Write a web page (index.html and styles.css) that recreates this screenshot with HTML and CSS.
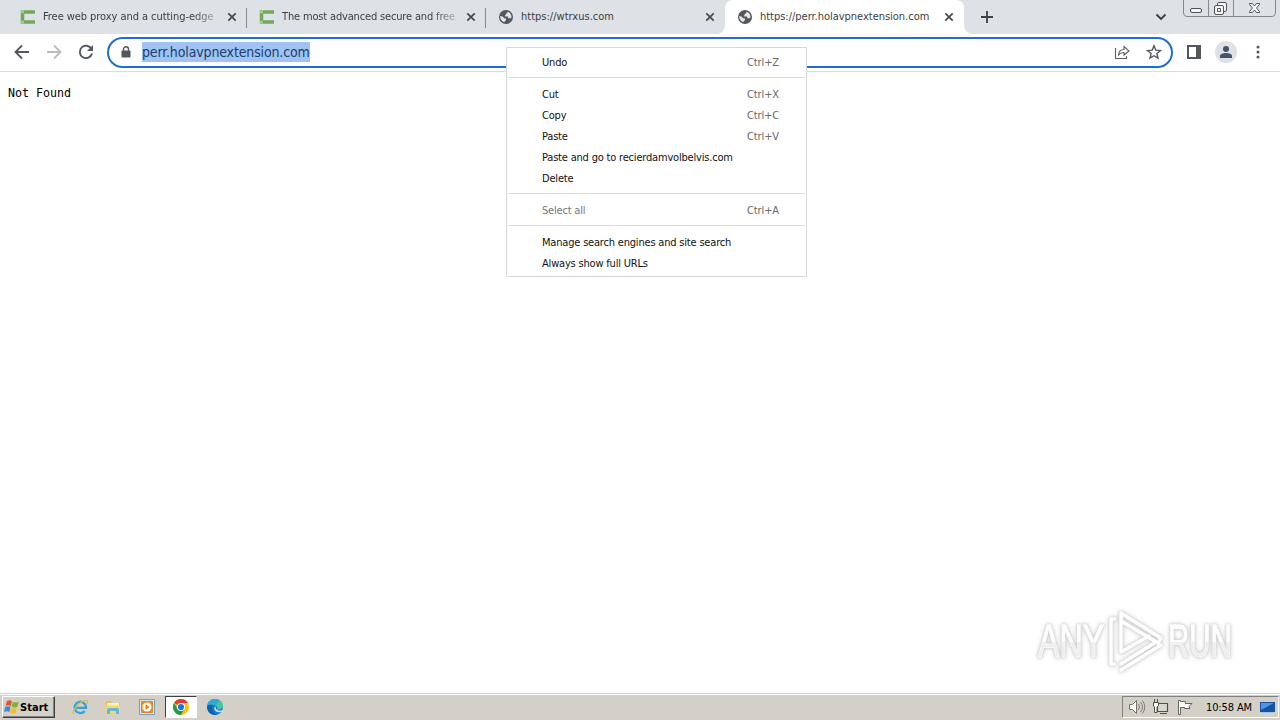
FILE: index.html
```html
<!DOCTYPE html>
<html lang="en">
<head>
<meta charset="utf-8">
<title>perr.holavpnextension.com</title>
<link rel="stylesheet" href="styles.css">
</head>
<body>
<svg class="defs" width="0" height="0">
  <symbol id="globe" viewBox="0 0 14 14"><circle cx="7" cy="7" r="7" fill="#54585d"/><path d="M1.200 6 3.500 6.500 5.500 8.500H7v1.500L5.500 11.500v.8C3 11.500 1 9.300 1.200 6ZM8.300 1.700C11.300 2.400 12.600 4.700 12.500 7.200L11.500 8.200H9.200V6.500H6.200V4.700L7.300 4.200V3.300H8.300Z" fill="#e4e7eb"/></symbol>
  <symbol id="cross" viewBox="0 0 10 10"><path d="M1.300 1.300 8.700 8.700M8.700 1.300 1.300 8.700" stroke="#45494d" stroke-width="1.700"/></symbol>
  <symbol id="cicon" viewBox="0 0 16 16"><path d="M15 3H2.500v10H15" fill="none" stroke="#72a957" stroke-width="3.500"/><path d="M1 1.200h3v3H1zM1 11.800h3v3H1z" fill="#a3c990"/></symbol>
</svg>
<div class="screen">
  <header class="tabs">
    <div class="tab"><svg class="fav"><use href="#cicon"/></svg><span class="title t1">Free web proxy and a cutting-edge</span><svg class="close"><use href="#cross"/></svg></div>
    <div class="tab"><svg class="fav"><use href="#cicon"/></svg><span class="title t2">The most advanced secure and free</span><svg class="close"><use href="#cross"/></svg></div>
    <div class="tab plain"><svg class="globe"><use href="#globe"/></svg><span class="title t3">https://wtrxus.com</span><svg class="close"><use href="#cross"/></svg></div>
    <div class="tab active"><svg class="globe"><use href="#globe"/></svg><span class="title t4">https://perr.holavpnextension.com</span><svg class="close"><use href="#cross"/></svg></div>
    <svg class="plus" viewBox="0 0 12 12"><path d="M6 0v12M0 6h12" stroke="#3c4043" stroke-width="1.800"/></svg>
    <svg class="chev" viewBox="0 0 12 8"><path d="m1.500 1.500 4.500 4.500 4.500-4.500" fill="none" stroke="#3c4043" stroke-width="1.900"/></svg>
    <svg class="wincontrols" viewBox="0 0 94 18"><path d="M.5 0v13q0 3.500 3.500 3.500h85q3.500 0 3.500-3.500V0M25.500 0v16M50.500 0v16" fill="none" stroke="#85888f"/><g fill="#f5f6f8" stroke="#505359"><rect x="7.500" y="8.500" width="11" height="4" rx="1.500"/><rect x="34.500" y="2.500" width="9" height="9" rx="1.500"/><rect x="31.500" y="5.500" width="9" height="9" rx="1.500"/><path d="M34.500 8.500h3v3h-3z"/><path d="M66.500 3.500h3l2 2.500 2-2.500h3v1l-3 3.500 3 3.500v1h-3l-2-2.500-2 2.500h-3v-1l3-3.500-3-3.500z"/></g></svg>
  </header>
  <nav class="toolbar">
    <svg class="nav" viewBox="0 0 16 16"><path d="M15 8H2M8 1.500 1.500 8 8 14.500" fill="none" stroke="#54585d" stroke-width="1.800"/></svg>
    <svg class="nav" viewBox="0 0 16 16"><path d="M1 8h13M8 1.500 14.500 8 8 14.500" fill="none" stroke="#babcbe" stroke-width="1.800"/></svg>
    <svg class="nav" viewBox="0 0 16 16"><path d="M13.500 5A6.200 6.200 0 1 0 14 9.500" fill="none" stroke="#54585d" stroke-width="1.900"/><path d="M15 1v6H9z" fill="#54585d"/></svg>
    <div class="omnibox">
      <svg class="lock" viewBox="0 0 10 12"><path d="M2.500 5V3.200a2.500 2.500 0 0 1 5 0V5" fill="none" stroke="#54585d" stroke-width="1.400"/><rect x=".5" y="4.500" width="9" height="7" rx="1" fill="#54585d"/></svg>
      <span class="url">perr.holavpnextension.com</span>
      <svg class="share" viewBox="0 0 16 16"><path d="M1.500 4v10.500h11V12M4.500 11c.3-4 2.500-5.500 5.500-5.500v-3L15 7l-5 4V8.500c-2.500 0-4 .5-5.500 2.500Z" fill="none" stroke="#5c6065" stroke-width="1.100"/></svg>
      <svg class="star" viewBox="0 0 16 16"><path d="m8 1.800 1.800 4.300 4.700.4-3.600 3 1.100 4.600L8 11.700l-4 2.400 1.100-4.600-3.600-3 4.700-.4Z" fill="none" stroke="#54585d" stroke-width="1.400"/></svg>
    </div>
    <svg class="side" viewBox="0 0 14 14"><path d="M0 0h14v14H0zM2 2v10h7V2z" fill="#54585d" fill-rule="evenodd"/></svg>
    <svg class="user" viewBox="0 0 22 22"><circle cx="11" cy="11" r="11" fill="#dee1e6"/><circle cx="11" cy="8" r="3" fill="#485168"/><path d="M5 17v-2c0-2 3-3 6-3s6 1 6 3v2z" fill="#485168"/></svg>
    <svg class="dots" viewBox="0 0 4 14"><g fill="#54585d"><circle cx="2" cy="2" r="1.500"/><circle cx="2" cy="7" r="1.500"/><circle cx="2" cy="12" r="1.500"/></g></svg>
  </nav>
  <main class="page"><pre>Not Found</pre></main>
  <footer class="taskbar">
    <div class="start"><svg viewBox="0 0 16 16"><path d="M3 2q3-1.500 5 .3L6.800 7.200Q4.500 5.500 1.500 7z" fill="#e3562a"/><path d="M8.800 2.800q2.500 1.600 6 0l-1.400 5q-3 1.500-5.600-.2z" fill="#7bb342"/><path d="M1.200 8q3-1.400 5.400.1L5.300 13Q3 11.500 0 12.800z" fill="#398bd2"/><path d="M7.500 8.600q2.800 1.600 5.600.2l-1.300 5q-3 1.400-5.600-.3z" fill="#f4bd2c"/></svg><b>Start</b></div>
    <svg class="app ie" viewBox="0 0 16 16"><path d="M3.500 8.800H14A5.700 5.700 0 1 0 12.800 12" fill="none" stroke="#35a3db" stroke-width="2.300"/><path d="M2.500 15Q-1 14 4.500 7.500T15 1.500q1 1-.5 3.500" fill="none" stroke="#dfba44" stroke-width="1.300"/></svg>
    <svg class="app folder" viewBox="0 0 16 16"><path d="M1 2h5l1 2h8v10H1z" fill="#e8bf5f"/><path d="M2 4h12v6H2z" fill="#fff3b2"/><path d="M1 6.500h14V14H1z" fill="#f4d778"/><path d="M2 15v-4q0-2 2-2h8q2 0 2 2v4h-3v-3H5v3z" fill="#62b8d8"/></svg>
    <svg class="app wmp" viewBox="0 0 16 16"><path d="M.5.500h15v15H.5z" fill="#d5ebf7" stroke="#68a4c9"/><path d="M2.500 2.500h11v11h-11z" fill="#f28c18" stroke="#e28324"/><circle cx="8" cy="8" r="4.500" fill="#fff"/><path d="m6.500 5 4 3-4 3z" fill="#ed7c0c"/></svg>
    <div class="current"><svg viewBox="0 0 16 16"><circle cx="8" cy="8" r="8" fill="#fbc116"/><path d="M8 8 1.070 4A8 8 0 0 1 14.930 4H8z" fill="#e33b2e"/><path d="M1.070 4A8 8 0 0 0 8 16l3.460-6L8 8 4.540 10z" fill="#229a4b"/><circle cx="8" cy="8" r="4" fill="#fff"/><circle cx="8" cy="8" r="3.100" fill="#1b73e8"/></svg></div>
    <svg class="app edge" viewBox="0 0 16 16"><circle cx="8" cy="8" r="8" fill="#137bc9"/><path d="M.2 7C1 2 4.500 0 8 0c5 0 8 3.500 8 7 0 3-3 4-6 3.500 1-2 0-4-2.500-4.500C4 5 1 6 .2 7Z" fill="#43c6a0"/><path d="M.2 7C1 2 4.500 0 8 0c2 0 3.500.5 4.500 1.500L9 6C5 4 2 5 .2 7Z" fill="#30a9d8"/><path d="M5.500 7C4 10 6 14 10 15.500 5 17-.5 13 .3 7 2 5 4 5.500 5.500 7Z" fill="#0b62af"/><path d="M9 7.500c-1 2.500 1.500 5.500 7 3.500l-.5 1.500C12 14 7.500 13 7.200 9.500c0-1 .8-1.800 1.800-2Z" fill="#dcdedb"/></svg>
    <div class="tray">
      <svg class="sound" viewBox="0 0 18 16"><path d="M1.500 5.500h3l4-4v13l-4-4h-3z" fill="#fff" stroke="#74716a"/><path d="M10.500 5q2 3 0 6M12.500 3q4 5 0 10M14.500 1.500q4.500 6.500 0 13" fill="none" stroke="#807d75"/></svg>
      <svg class="network" viewBox="0 0 18 16"><path d="M5.500 4.500h10v8h-10zM8 14.500h7" fill="#d7d8d5" stroke="#4f504b" stroke-width="1.200"/><path d="M2.500 0v3M5.500 0v3M1.500 3.500h5v3L5 8v5.500H2.500V8l-1-1z" fill="#fff" stroke="#4f504b"/></svg>
      <svg class="flag" viewBox="0 0 18 16"><path d="M2.500 15.500v-14h2v1h5v2h6.500l-3 3 1 2H8.500V8.500h-4v7z" fill="#fff" stroke="#67645e"/></svg>
      <span>10:58 AM</span>
      <svg class="desktop" viewBox="0 0 15 13"><path d="M0 1h15v10H0z" fill="#1554a3"/><path d="M1 2h13L1 9z" fill="#4f94df"/><path d="M1 11h13v1H1z" fill="#9fc7ed"/></svg>
    </div>
  </footer>
  <div class="menu">
    <div class="row"><span>Undo</span><kbd>Ctrl+Z</kbd></div><hr>
    <div class="row"><span>Cut</span><kbd>Ctrl+X</kbd></div>
    <div class="row"><span>Copy</span><kbd>Ctrl+C</kbd></div>
    <div class="row"><span>Paste</span><kbd>Ctrl+V</kbd></div>
    <div class="row"><span>Paste and go to recierdamvolbelvis.com</span></div>
    <div class="row"><span>Delete</span></div><hr>
    <div class="row disabled"><span>Select all</span><kbd>Ctrl+A</kbd></div><hr>
    <div class="row"><span>Manage search engines and site search</span></div>
    <div class="row"><span>Always show full URLs</span></div>
  </div>
  <div class="watermark"><span>ANY</span><svg viewBox="0 0 58 64"><g fill="none" stroke="#fff" stroke-width="3.500" stroke-linejoin="round" stroke-linecap="round"><path d="M8 10H4v45h3M14 43V4l40 25-3 5-37-22M14 43l28-16M14 61l40-25M14 55l35-22"/></g></svg><span class="run">RUN</span></div>
</div>
</body>
</html>
```
FILE: styles.css
```css
* { box-sizing: border-box; }
body { margin: 0; font-family: "DejaVu Sans Condensed", "DejaVu Sans", sans-serif; font-stretch: condensed; overflow: hidden; }
svg { display: block; flex: none; }
.defs { position: absolute; }
.screen { position: relative; width: 1280px; height: 720px; display: flex; flex-direction: column; background: #fff; }
.tabs { height: 34px; display: flex; background: #dee1e6; flex: none; padding-left: 8px; }
.tab { width: 239px; display: flex; align-items: center; padding-left: 12px; position: relative; flex: none; font-size: 11px; color: #3c4043; }
.tab:nth-child(-n+2)::after { content: ""; position: absolute; right: 0; top: 8px; height: 20px; border-right: 1px solid #85888d; }
.fav { width: 16px; height: 16px; margin-right: 7px; }
.globe { width: 14px; height: 14px; margin-right: 8px; }
.tab.plain, .tab.active { padding-left: 13px; }
.title { width: 174px; margin-right: 10px; white-space: nowrap; overflow: hidden; line-height: 18px; padding-bottom: 0; }
.t1, .t2 { -webkit-mask-image: linear-gradient(90deg, #000 86%, #0004); }
.t1 { letter-spacing: -.06px; }
.t2 { letter-spacing: -.16px; }
.t3 { letter-spacing: .01px; }
.t4 { letter-spacing: -.02px; }
.close { width: 10px; height: 10px; }
.active { background: #fff; border-radius: 8px 8px 0 0; }
.active::before, .active::after { content: ""; position: absolute; bottom: 0; width: 8px; height: 8px; }
.active::before { left: -8px; background: radial-gradient(circle at 0 0, transparent 7.5px, #fff 8px); }
.active::after { right: -8px; background: radial-gradient(circle at 100% 0, transparent 7.5px, #fff 8px); }
.plus { width: 12px; height: 12px; margin: 11px 0 0 17px; }
.chev { width: 12px; height: 8px; margin: 13px 0 0 162px; }
.wincontrols { width: 94px; height: 18px; margin-left: 16px; }
.toolbar { height: 38px; border-bottom: 1px solid #dadce0; display: flex; align-items: center; padding: 0 0 1px 14px; flex: none; }
.nav { width: 16px; height: 16px; margin-right: 16px; }
.nav:nth-child(3) { margin-right: 13px; }
.omnibox { width: 1066px; height: 31px; border: 2px solid #226ed0; border-radius: 16px; display: flex; align-items: center; padding-left: 12px; }
.lock { width: 10px; height: 12px; margin-right: 11px; }
.url { width: 168px; height: 20px; line-height: 20px; font-size: 14px; letter-spacing: -.14px; color: #203d6b; background: #9ec3f4; white-space: nowrap; }
.share { width: 16px; height: 16px; margin-left: 804px; }
.star { width: 16px; height: 16px; margin-left: 16px; }
.side { width: 14px; height: 14px; margin-left: 14px; }
.user { width: 22px; height: 22px; margin-left: 14px; }
.dots { width: 4px; height: 14px; margin-left: 19px; }
.page { flex: 1; }
pre { margin: 12px 8px; font: 11.630px/18px "DejaVu Sans Mono", monospace; color: #000; }
.taskbar { height: 27px; background: #d4d0c8; box-shadow: inset 0 1px #fff; border-top: 1px solid #d4d0c8; display: flex; align-items: center; padding: 1px 1px 1px 2px; flex: none; }
.start { width: 53px; height: 22px; border: 1px solid; border-color: #fff #404040 #404040 #fff; box-shadow: inset -1px -1px #808080; display: flex; align-items: center; padding-left: 1px; font-size: 11px; color: #000; letter-spacing: .05px; }
.start svg { width: 16px; height: 16px; }
.app { width: 16px; height: 16px; }
.ie { margin-left: 17px; }
.folder { margin-left: 17px; }
.wmp { margin-left: 18px; }
.current { width: 32px; height: 22px; background: #fff; margin-left: 10px; border: 1px solid; border-color: #404040 #fff #fff #404040; padding: 2px 7px; }
.current svg { width: 16px; height: 16px; }
.edge { margin-left: 10px; }
.tray { width: 157px; height: 22px; border: 1px solid; border-color: #808080 #fff #fff #808080; margin-left: auto; display: flex; align-items: center; padding-left: 5px; font-size: 11px; letter-spacing: -.12px; color: #000; white-space: nowrap; }
.sound, .network, .flag { width: 18px; height: 16px; }
.network { margin-left: 6px; }
.flag { margin: 0 12px 0 6px; }
.tray span { width: 47px; }
.desktop { width: 15px; height: 13px; margin-left: 7px; }
.menu { position: absolute; left: 506px; top: 47px; width: 301px; height: 230px; background: #fff; border: 1px solid #d8d8d8; padding: 4px 1px; font-size: 11px; }
.row { height: 21px; display: flex; align-items: center; justify-content: space-between; padding: 0 26px 0 34px; line-height: 21px; color: #111; letter-spacing: -.19px; white-space: nowrap; }
.menu hr { height: 1px; border: 0; background: #dcdcdc; margin: 4px 0 6px; }
.menu kbd { font: inherit; color: #65686c; letter-spacing: -.12px; }
.disabled { color: #777; }
.watermark { position: absolute; left: 1038px; top: 608px; height: 66px; display: flex; align-items: center; font: 46px/66px "Liberation Sans", sans-serif; filter: drop-shadow(0 0 1px #d0d0d0) drop-shadow(0 0 2px #ccc); }
.watermark span { display: block; width: 67px; transform: scaleX(.7); transform-origin: 0 50%; color: transparent; background: linear-gradient(#fff 52%, #eee 52%); background-clip: text; -webkit-text-stroke: 1px #fff9; }
.watermark span { width: 96px; margin-right: -29px; }
.watermark svg { width: 58px; height: 64px; margin-left: 2px; }
.watermark .run { width: 102px; margin: 0 0 0 3px; transform: scaleX(.64); }
```
